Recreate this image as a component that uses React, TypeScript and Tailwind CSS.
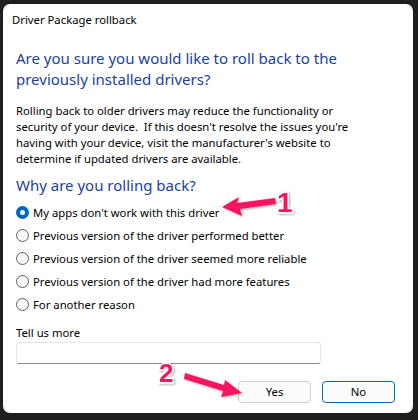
import React from "react";

const font = { fontFamily: '"Segoe UI", "Noto Sans", "Liberation Sans", sans-serif' };

function Radio({ checked, label }: { checked?: boolean; label: string }) {
  return (
    <div className="flex items-center h-[23px]">
      {checked ? (
        <span className="w-[13px] h-[13px] rounded-full bg-[#0067c0] flex items-center justify-center shrink-0">
          <span className="w-[5px] h-[5px] rounded-full bg-white" />
        </span>
      ) : (
        <span className="w-[13px] h-[13px] rounded-full border border-[#5f5f5f] bg-[#f9f9f9] shrink-0" />
      )}
      <span className="ml-[4px] text-[11.3px] text-black leading-none">{label}</span>
    </div>
  );
}

export default function App() {
  return (
    <div className="w-[418px] h-[420px] bg-[#1f1f1f] pt-[4px] pl-[3px]" style={font}>
      <div className="relative w-[410px] h-[409px] bg-white rounded-[7px] overflow-hidden flex flex-col">
        <div className="h-[33px] flex items-center pl-[9px] text-[11.3px] text-black">Driver Package rollback</div>
        <div className="pl-[13px] pr-[10px] flex flex-col">
          <div className="mt-[11px] text-[15px] leading-[21px] text-[#1a3fa0] w-[340px]">
            Are you sure you would like to roll back to the previously installed drivers?
          </div>
          <div className="mt-[13px] text-[11.3px] leading-[16px] text-black w-[345px]">
            Rolling back to older drivers may reduce the functionality or security of your device.&nbsp; If this doesn't resolve the issues you're having with your device, visit the manufacturer's website to determine if updated drivers are available.
          </div>
          <div className="mt-[6px] text-[15px] leading-[24px] text-[#1a3fa0]">Why are you rolling back?</div>
          <div className="mt-[4px] flex flex-col">
            <Radio checked label="My apps don't work with this driver" />
            <Radio label="Previous version of the driver performed better" />
            <Radio label="Previous version of the driver seemed more reliable" />
            <Radio label="Previous version of the driver had more features" />
            <Radio label="For another reason" />
          </div>
          <div className="mt-[9px] text-[11.3px] leading-[16px] text-black">Tell us more</div>
          <div className="mt-[1px] w-[305px] h-[22px] border border-[#e5e5e5] border-b-[#8a8a8a] rounded-[3px] bg-white" />
          <div className="mt-[17px] flex justify-end gap-[11px] pr-[8px]">
            <button className="w-[73px] h-[22px] rounded-[4px] border border-[#d0d0d0] bg-[#fbfbfb] text-[11.3px] text-black">Yes</button>
            <button className="w-[73px] h-[22px] rounded-[4px] border border-[#0067c0] bg-[#fbfbfb] text-[11.3px] text-black">No</button>
          </div>
        </div>

        <svg className="absolute left-0 top-0 pointer-events-none" width="410" height="409" viewBox="0 0 410 409">
          <defs>
            <filter id="sh" x="-20%" y="-20%" width="140%" height="140%">
              <feDropShadow dx="1" dy="1" stdDeviation="1" floodColor="#000" floodOpacity="0.35" />
            </filter>
          </defs>
          <g filter="url(#sh)">
            <path d="M272 194 L234 199 L236 193 L219 203 L239 212 L237 205 L273 200 Z" fill="#f5195e" />
            <path d="M182 369 L221 381 L222 376 L239 389 L218 393 L220 387 L181 375 Z" fill="#f5195e" />
          </g>
          <text x="274" y="208" fontSize="28" fontWeight="900" fill="#f5195e" stroke="#fff" strokeWidth="3" paintOrder="stroke" filter="url(#sh)" style={{ fontFamily: '"Liberation Sans", Arial, sans-serif' }}>1</text>
          <text x="156" y="378" fontSize="26" fontWeight="900" fill="#f5195e" stroke="#fff" strokeWidth="3" paintOrder="stroke" filter="url(#sh)" style={{ fontFamily: '"Liberation Sans", Arial, sans-serif' }}>2</text>
        </svg>
      </div>
    </div>
  );
}
